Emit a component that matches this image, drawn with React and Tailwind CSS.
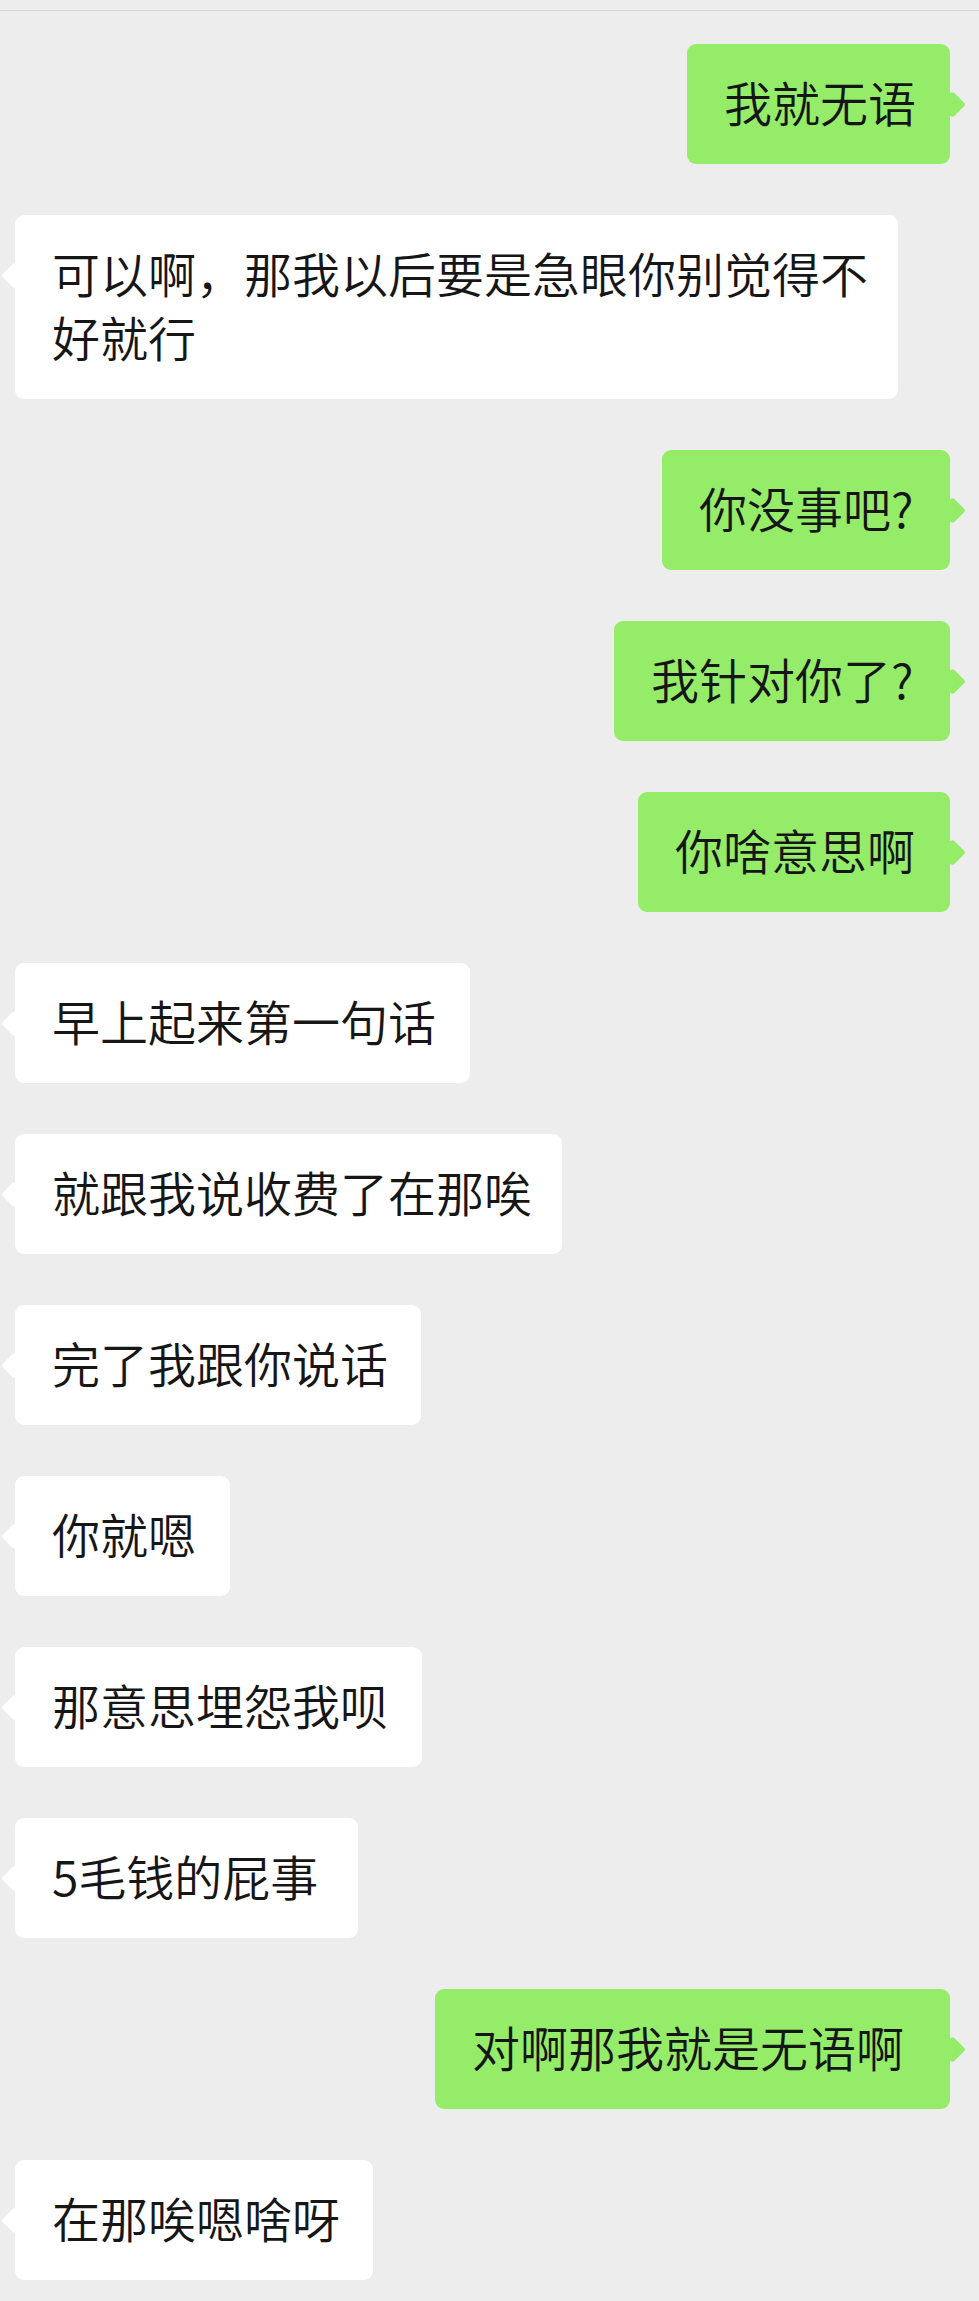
import React from "react";

const messages = [
  { side: "right", w: "w-[263px]", lines: ["我就无语"] },
  { side: "left", w: "w-[883px]", lines: ["可以啊，那我以后要是急眼你别觉得不", "好就行"] },
  { side: "right", w: "w-[288px]", lines: ["你没事吧?"] },
  { side: "right", w: "w-[336px]", lines: ["我针对你了?"] },
  { side: "right", w: "w-[312px]", lines: ["你啥意思啊"] },
  { side: "left", w: "w-[455px]", lines: ["早上起来第一句话"] },
  { side: "left", w: "w-[547px]", lines: ["就跟我说收费了在那唉"] },
  { side: "left", w: "w-[406px]", lines: ["完了我跟你说话"] },
  { side: "left", w: "w-[215px]", lines: ["你就嗯"] },
  { side: "left", w: "w-[407px]", lines: ["那意思埋怨我呗"] },
  { side: "left", w: "w-[343px]", lines: ["5毛钱的屁事"] },
  { side: "right", w: "w-[515px]", lines: ["对啊那我就是无语啊"] },
  { side: "left", w: "w-[358px]", lines: ["在那唉嗯啥呀"] },
];

function Bubble({ side, w, lines }) {
  const mine = side === "right";
  return (
    <div className={mine ? "flex justify-end" : "flex justify-start"}>
      <div
        className={
          "relative rounded-[9px] pl-[37px] pt-[25px] pb-[31px] text-[48px] font-[350] leading-[64px] text-[#161616] whitespace-nowrap " +
          (mine ? "bg-[#95ec69] " : "bg-white ") +
          w
        }
      >
        <span
          className={
            "absolute top-[51px] h-[19px] w-[19px] rotate-45 rounded-[3px] " +
            (mine ? "-right-[12px] bg-[#95ec69]" : "-left-[10px] bg-white")
          }
        />
        {lines.map((l, i) => (
          <div key={i} className="relative">
            {l}
          </div>
        ))}
      </div>
    </div>
  );
}

export default function App() {
  return (
    <div className="min-h-screen bg-[#ededed] font-['Noto_Sans_CJK_SC','Noto_Sans_CJK_JP',sans-serif]">
      <div className="h-[10px]" />
      <div className="h-px bg-[#d6d6d6]" />
      <div className="flex flex-col gap-[51px] pt-[33px] pb-[19px] pl-[15px] pr-[29px]">
        {messages.map((m, i) => (
          <Bubble key={i} {...m} />
        ))}
      </div>
    </div>
  );
}
